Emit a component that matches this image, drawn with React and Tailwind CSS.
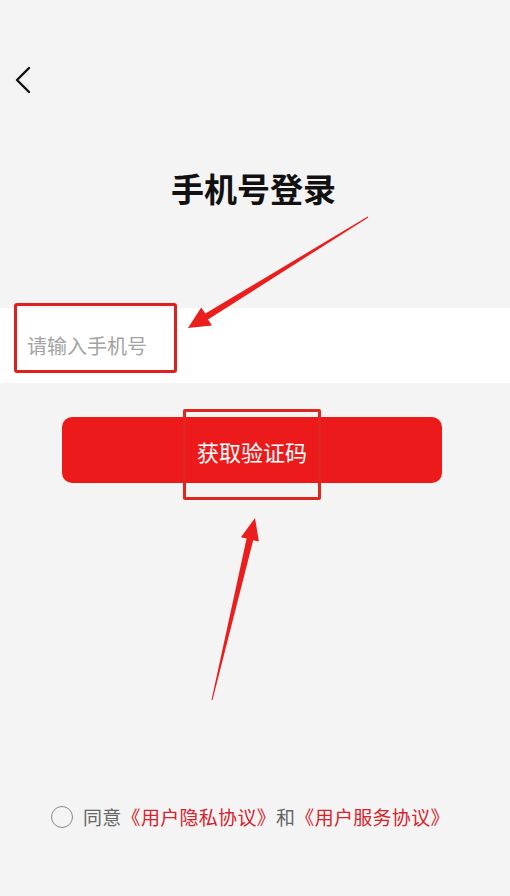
export default function App() {
  return (
    <div
      className="relative flex flex-col h-[896px] w-[510px] bg-[#f4f4f4] overflow-hidden"
      style={{ fontFamily: '"Noto Sans CJK SC", "Noto Sans", sans-serif' }}
    >
      <div className="pt-[66px] pl-[14px]">
        <svg width="20" height="28" viewBox="0 0 20 28" fill="none">
          <path d="M15 2 L3 14 L15 26" stroke="#111" strokeWidth="2.4" strokeLinecap="round" strokeLinejoin="round" />
        </svg>
      </div>

      <h1 className="mt-[74px] text-center text-[33px] leading-[40px] font-bold text-[#111] pr-[3px]">手机号登录</h1>

      <div className="mt-[100px] h-[75px] bg-white flex items-center pl-[27px]">
        <input
          className="w-full bg-transparent outline-none text-[20px] text-[#333] placeholder:text-[#a3a3a3]"
          placeholder="请输入手机号"
        />
      </div>

      <button className="mt-[34px] ml-[62px] mr-[68px] h-[66px] rounded-[10px] bg-[#ec1a1a] text-white text-[22px] flex items-center justify-center pt-[3px]">
        获取验证码
      </button>

      <div className="mt-auto mb-[68px] ml-[51px] flex items-center gap-[10px]">
        <span className="w-[22px] h-[22px] rounded-full border-[1.5px] border-[#8a8a8a]" />
        <p className="text-[19px] leading-[22px] tracking-[0.3px] text-[#666]">
          同意<span className="text-[#d6232c]">《用户隐私协议》</span>和<span className="text-[#d6232c]">《用户服务协议》</span>
        </p>
      </div>

      {/* annotations */}
      <div className="absolute left-[14px] top-[303px] w-[163px] h-[70px] border-[3px] border-[#e0201c] rounded-[3px]" />
      <div className="absolute left-[183px] top-[409px] w-[138px] h-[91px] border-[3px] border-[#e0261e] rounded-[2px]" />
      <svg className="absolute left-0 top-0 pointer-events-none" width="510" height="896" viewBox="0 0 510 896">
        <polygon
          points="368.3,217.4 208.0,319.5 212,325.5 188,328 201.2,307.6 205.4,313.4 367.7,216.6"
          fill="#ec1d1d"
        />
        <polygon
          points="212.5,700.1 253.2,540.2 258.9,541.6 255,518 240.9,537.2 246.6,538.6 211.5,699.9"
          fill="#ec1d1d"
        />
      </svg>
    </div>
  );
}
